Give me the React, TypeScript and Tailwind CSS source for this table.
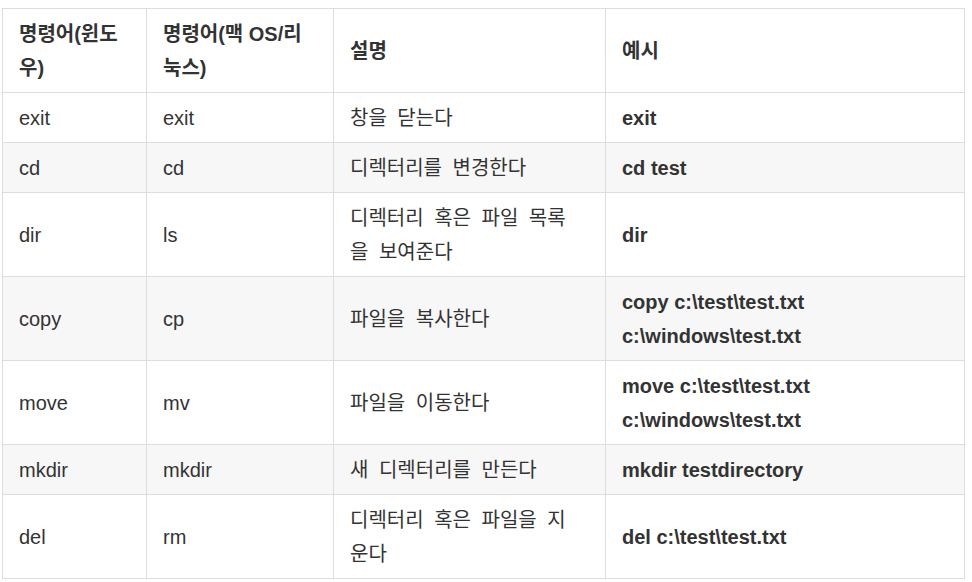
import React from "react";

type Row = {
  win: string;
  unix: string;
  desc: React.ReactNode;
  example: React.ReactNode;
};

const rows: Row[] = [
  { win: "exit", unix: "exit", desc: "창을 닫는다", example: "exit" },
  { win: "cd", unix: "cd", desc: "디렉터리를 변경한다", example: "cd test" },
  {
    win: "dir",
    unix: "ls",
    desc: (
      <>
        디렉터리 혹은 파일 목록
        <br />을 보여준다
      </>
    ),
    example: "dir",
  },
  {
    win: "copy",
    unix: "cp",
    desc: "파일을 복사한다",
    example: (
      <>
        copy c:\test\test.txt
        <br />
        c:\windows\test.txt
      </>
    ),
  },
  {
    win: "move",
    unix: "mv",
    desc: "파일을 이동한다",
    example: (
      <>
        move c:\test\test.txt
        <br />
        c:\windows\test.txt
      </>
    ),
  },
  { win: "mkdir", unix: "mkdir", desc: "새 디렉터리를 만든다", example: "mkdir testdirectory" },
  {
    win: "del",
    unix: "rm",
    desc: (
      <>
        디렉터리 혹은 파일을 지
        <br />
        운다
      </>
    ),
    example: "del c:\\test\\test.txt",
  },
];

const cell = "border border-[#dddddd] px-4 pt-2 pb-[7px] align-middle";

export default function App() {
  return (
    <div
      className="bg-white min-h-screen pt-2 pl-[2px] text-[20px] leading-[34px] text-[#333333]"
      style={{ fontFamily: '"Liberation Sans", "Noto Sans CJK KR", sans-serif' }}
    >
      <table className="border-collapse table-fixed w-[963px]">
        <colgroup>
          <col className="w-[144px]" />
          <col className="w-[187px]" />
          <col className="w-[272px]" />
          <col className="w-[359px]" />
        </colgroup>
        <thead>
          <tr className="bg-white font-bold text-left">
            <th className={cell}>
              명령어(윈도
              <br />
              우)
            </th>
            <th className={cell}>
              명령어(맥 OS/리
              <br />
              눅스)
            </th>
            <th className={cell}>설명</th>
            <th className={cell}>예시</th>
          </tr>
        </thead>
        <tbody>
          {rows.map((r, i) => (
            <tr key={r.win} className={i % 2 === 1 ? "bg-[#f7f7f7]" : "bg-white"}>
              <td className={cell}>{r.win}</td>
              <td className={cell}>{r.unix}</td>
              <td className={cell + " [word-spacing:5px]"}>{r.desc}</td>
              <td className={cell + " font-bold"}>{r.example}</td>
            </tr>
          ))}
        </tbody>
      </table>
    </div>
  );
}
